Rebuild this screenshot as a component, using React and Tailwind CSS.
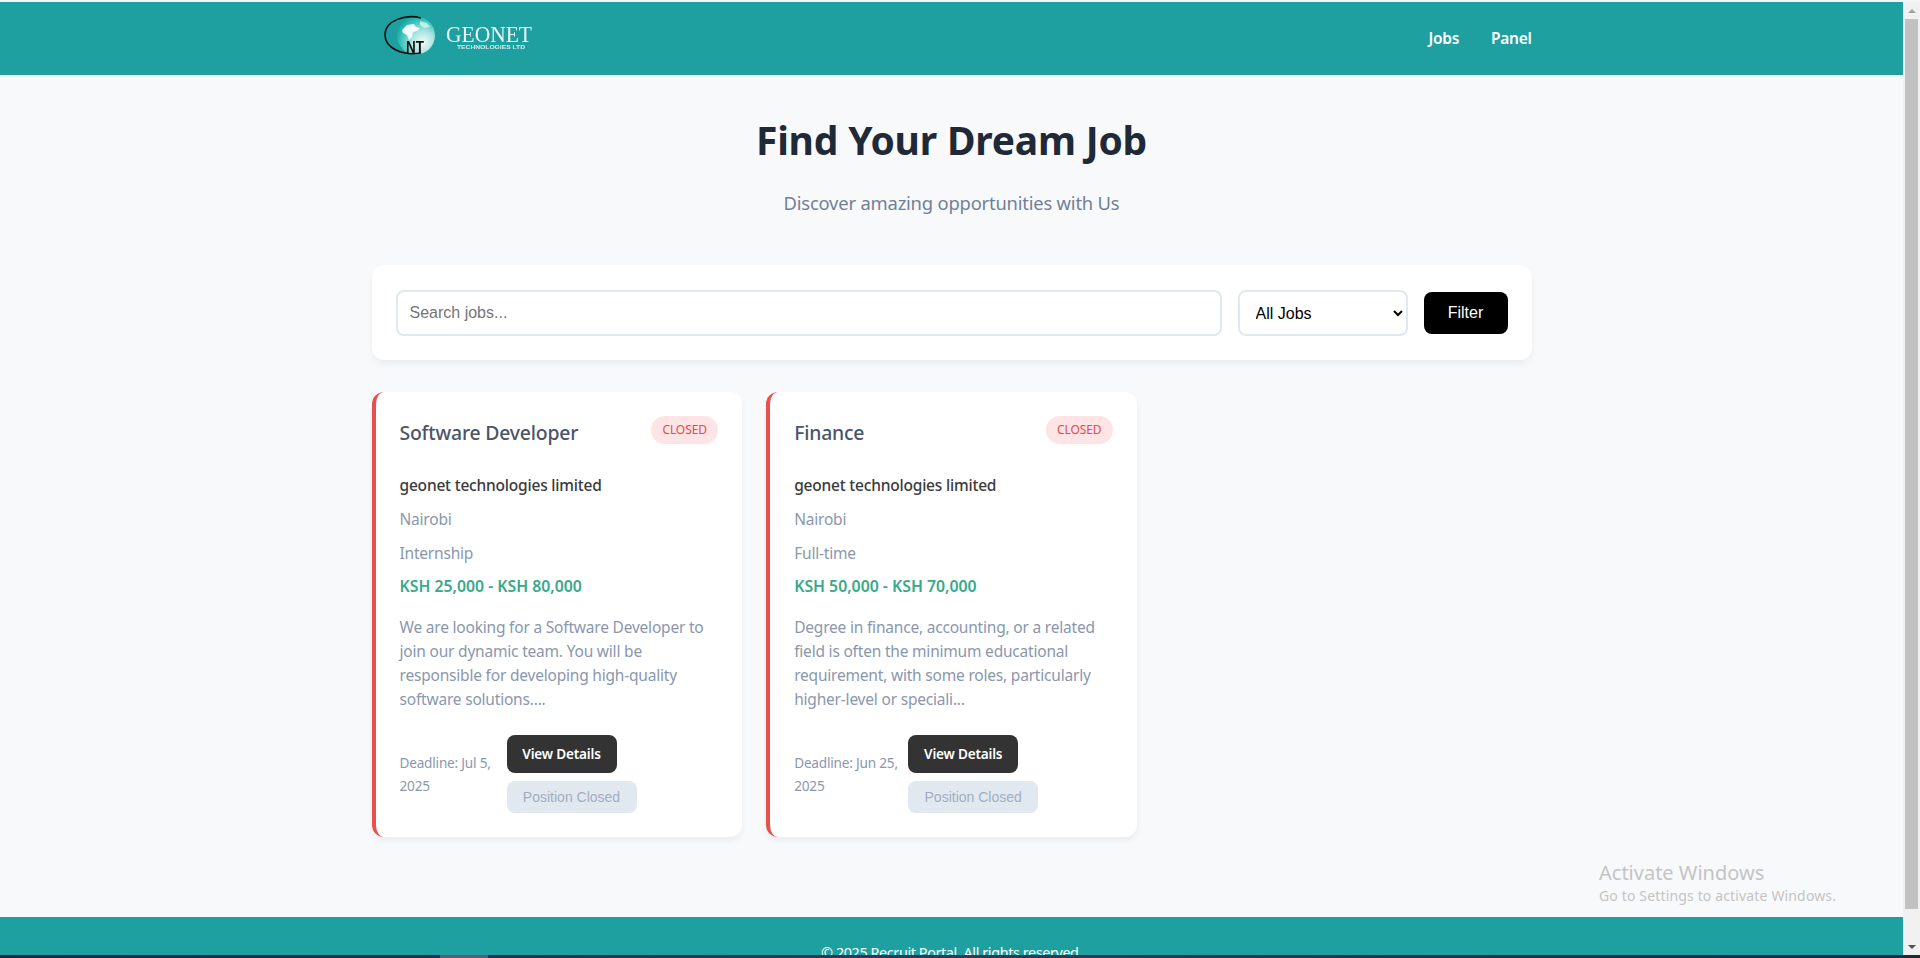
const jobs = [
  {
    title: "Software Developer",
    type: "Internship",
    salary: "KSH 25,000 - KSH 80,000",
    desc: ["We are looking for a Software Developer to", "join our dynamic team. You will be", "responsible for developing high-quality", "software solutions...."],
    deadline: ["Deadline: Jul 5,", "2025"],
    deadlineWidth: "w-[107px]",
  },
  {
    title: "Finance",
    type: "Full-time",
    salary: "KSH 50,000 - KSH 70,000",
    desc: ["Degree in finance, accounting, or a related", "field is often the minimum educational", "requirement, with some roles, particularly", "higher-level or speciali..."],
    deadline: ["Deadline: Jun 25,", "2025"],
    deadlineWidth: "w-[114px]",
  },
]

function Logo() {
  return (
    <svg width="160" height="50" viewBox="0 0 160 50" className="shrink-0">
      <defs>
        <radialGradient id="globe" cx="0.68" cy="0.68" r="0.75">
          <stop offset="0" stopColor="#f4fbfa" />
          <stop offset="0.4" stopColor="#a8e4df" />
          <stop offset="0.75" stopColor="#3cc4bf" />
          <stop offset="1" stopColor="#17a5a5" />
        </radialGradient>
        <filter id="soft"><feGaussianBlur stdDeviation="0.35" /></filter>
      </defs>
      <g filter="url(#soft)">
        <circle cx="32" cy="21.5" r="19" fill="url(#globe)" />
        <path d="M18 16l5-5 7-1 2 3 4 1-3 3-4 1-1 5-3 3-2-5-4-2z" fill="#fff" opacity="0.9" />
        <path d="M36 7l7 2 3 4-6 1-4-3z" fill="#e9f8f6" opacity="0.7" />
        <path d="M1 21C1 6 22 0 37 4 M37 39C18 42 1 34 1 21" fill="none" stroke="#111" strokeWidth="1.6" />
        <text x="22" y="39" fontFamily="'Liberation Sans', sans-serif" fontSize="17" fontWeight="700" fill="#111" textLength="18" lengthAdjust="spacingAndGlyphs">NT</text>
        <text x="62" y="27.5" fontFamily="'Liberation Serif', serif" fontSize="24" fill="#e8f5f4" textLength="86" lengthAdjust="spacingAndGlyphs">GEONET</text>
        <text x="73" y="34.5" fontFamily="'Liberation Sans', sans-serif" fontSize="4.8" fontWeight="700" fill="#d5eeed" textLength="68" lengthAdjust="spacingAndGlyphs">TECHNOLOGIES LTD</text>
      </g>
    </svg>
  )
}

function JobCard({ job }) {
  const body = "text-[15.5px] leading-[24px] tracking-[-0.2px] text-[#8a97ad]"
  return (
    <div className="bg-white rounded-xl border-l-4 border-[#e94f4f] shadow-[0_4px_6px_rgba(0,0,0,0.05)] h-[445px] pl-6 pr-6 pt-6">
      <div className="flex justify-between items-start">
        <h3 className="text-[19.4px] leading-[32px] tracking-[-0.2px] font-medium text-[#4a5568] mt-[1px]">{job.title}</h3>
        <span className="h-[28px] w-[67px] rounded-[14px] bg-[#fee4e4] text-[#e5484d] text-[12px] tracking-[-0.1px] flex items-center justify-center uppercase">Closed</span>
      </div>
      <p className="text-[15.5px] leading-[24px] tracking-[-0.2px] font-medium text-[#3a3a3a] mt-[24px]">geonet technologies limited</p>
      <p className={`${body} mt-[10px]`}>Nairobi</p>
      <p className={`${body} mt-[10px]`}>{job.type}</p>
      <p className="text-[15.8px] leading-[24px] font-semibold text-[#3aa88a] mt-[9px]">{job.salary}</p>
      <div className={`${body} mt-[17px]`}>
        {job.desc.map(line => <div key={line} className="whitespace-nowrap">{line}</div>)}
      </div>
      <div className="flex items-center mt-[24px]">
        <div className={`${job.deadlineWidth} text-[13.6px] leading-[23px] tracking-[-0.2px] text-[#8a97ad] shrink-0`}>
          {job.deadline.map(line => <div key={line}>{line}</div>)}
        </div>
        <div className="flex flex-col items-start gap-2">
          <button className="h-[38px] w-[110px] rounded-lg bg-[#333] text-white text-[13.6px] tracking-[-0.2px] font-semibold">View Details</button>
          <button className="h-[32px] w-[130px] rounded-lg bg-[#e2e8f0] text-[#a0aec0] text-[14px] font-['Liberation_Sans',sans-serif]">Position Closed</button>
        </div>
      </div>
    </div>
  )
}

function Scrollbar() {
  return (
    <div className="w-[17px] shrink-0 bg-[#f1f1f1] flex flex-col items-center">
      <div className="h-[17px] flex items-center justify-center">
        <div className="w-0 h-0 border-x-[4px] border-x-transparent border-b-[4px] border-b-[#a3a3a3]" />
      </div>
      <div className="w-[13px] flex-1 bg-[#c1c1c1]" />
      <div className="h-[46px] flex items-end justify-center pb-[6px]">
        <div className="w-0 h-0 border-x-[4px] border-x-transparent border-t-[4px] border-t-[#505050]" />
      </div>
    </div>
  )
}

export default function App() {
  return (
    <div className="relative h-[958px] overflow-hidden flex flex-col bg-white font-['Noto_Sans',sans-serif]">
      <div className="h-[2px] bg-[#f7f4f4] shrink-0" />
      <div className="flex flex-1 min-h-0">
        <div className="flex-1 min-w-0 flex flex-col">
          {/* Header */}
          <header className="h-[73px] shrink-0 bg-[#1e9fa0]">
            <div className="w-[1160px] mx-auto flex items-center justify-between h-full pl-[12px]">
              <Logo />
              <nav className="flex items-center gap-8 text-white font-semibold text-[15.5px] tracking-[-0.3px]">
                <a>Jobs</a>
                <a>Panel</a>
              </nav>
            </div>
          </header>

          {/* Main */}
          <main className="flex-1 min-h-0 bg-[#f8f9fb]">
            <div className="w-[1160px] mx-auto">
              <h1 className="text-[39px] leading-[54px] tracking-[-0.2px] font-bold text-[#1f2937] text-center mt-[38px]">Find Your Dream Job</h1>
              <p className="text-[18.4px] leading-[28px] tracking-[-0.2px] text-[#718096] text-center mt-[22px]">Discover amazing opportunities with Us</p>

              <div className="bg-white rounded-xl shadow-[0_4px_6px_rgba(0,0,0,0.05)] px-6 pt-[25px] pb-[24px] flex items-center gap-4 mt-[48px] font-['Liberation_Sans',sans-serif]">
                <input
                  placeholder="Search jobs..."
                  className="flex-1 min-w-0 h-[46px] px-[12px] border-2 border-[#e2e8f0] rounded-lg text-[16px] placeholder:text-[#757575] bg-white"
                />
                <select className="w-[170px] h-[46px] px-3 border-2 border-[#e2e8f0] rounded-lg text-[16px] bg-white text-black">
                  <option>All Jobs</option>
                </select>
                <button className="w-[84px] h-[42px] rounded-lg bg-black text-white text-[16px]">Filter</button>
              </div>

              <div className="grid grid-cols-3 gap-6 mt-[32px]">
                {jobs.map(job => <JobCard key={job.title} job={job} />)}
              </div>
            </div>
          </main>

          {/* Footer */}
          <footer className="h-[38px] shrink-0 bg-[#1e9fa0] overflow-hidden text-center text-white text-[14.4px] leading-[20px] tracking-[-0.4px] pt-[26px]">
            © 2025 Recruit Portal. All rights reserved.
          </footer>
        </div>
        <Scrollbar />
      </div>

      {/* Taskbar strip */}
      <div className="h-[3px] shrink-0 flex bg-gradient-to-r from-[#1e2a3a] via-[#34395a] to-[#1e2a3a]">
        <div className="ml-[440px] w-[48px] bg-[#5a5f70]" />
      </div>

      {/* Windows watermark */}
      <div className="absolute left-[1599px] top-[860px] text-[#c4c4c4] pointer-events-none">
        <div className="text-[20px] leading-[26px]">Activate Windows</div>
        <div className="text-[14px] leading-[20px] tracking-[0.15px]">Go to Settings to activate Windows.</div>
      </div>
    </div>
  )
}
